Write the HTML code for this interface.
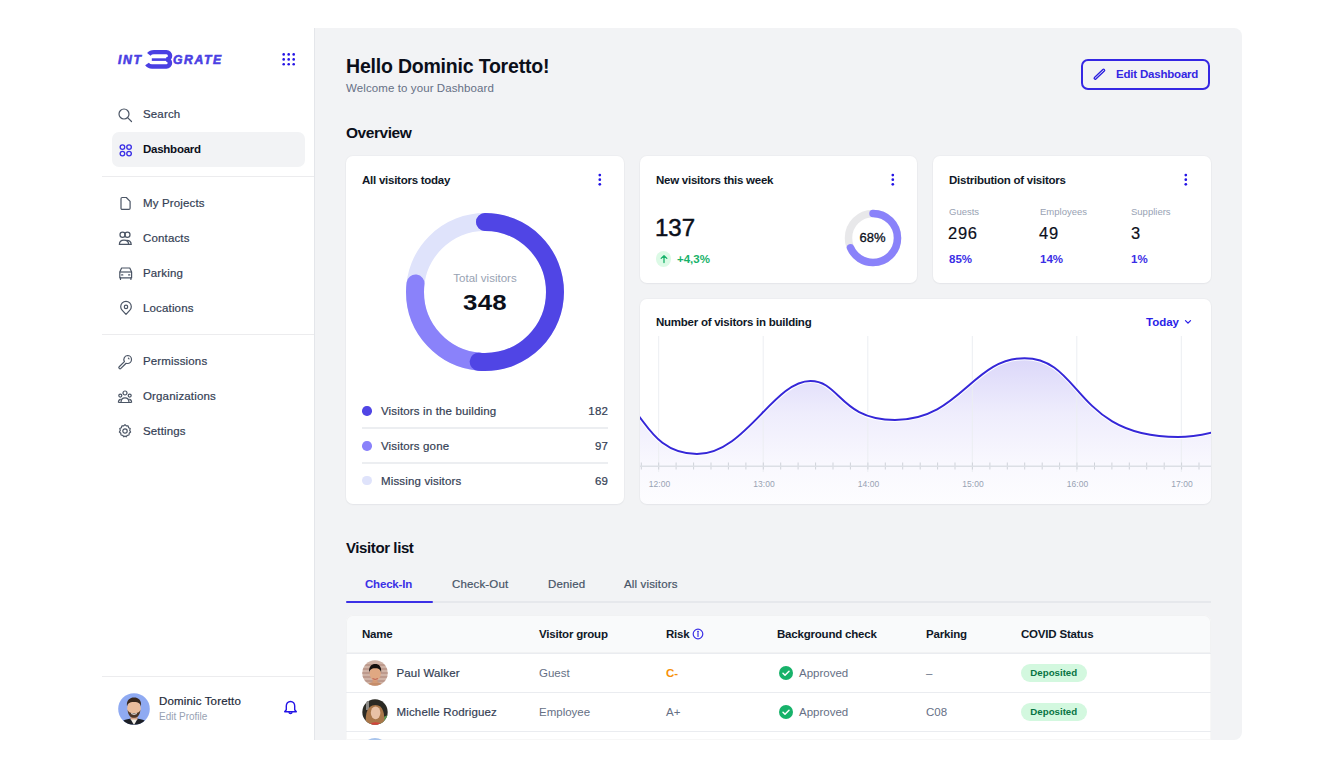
<!DOCTYPE html>
<html><head><meta charset="utf-8">
<style>
*{box-sizing:border-box;margin:0;padding:0}
html,body{width:1344px;height:768px;overflow:hidden;background:#fff;font-family:"Liberation Sans",sans-serif;color:#111827}
.abs{position:absolute;white-space:nowrap}
#main{position:absolute;left:314px;top:28px;width:928px;height:712px;background:#f2f3f5;border-radius:0 8px 8px 0;border-left:1px solid #e4e6ea}
.nav{position:absolute;left:143px;font-size:11.5px;color:#344054;line-height:14px;white-space:nowrap;-webkit-text-stroke:0.2px #344054;letter-spacing:0.15px}
.med{-webkit-text-stroke:0.2px currentColor;letter-spacing:0.15px}
.ico{position:absolute;left:116px}
.sep{position:absolute;left:102px;width:212px;height:1px;background:#ececee}
.card{position:absolute;background:#fff;border-radius:7px;box-shadow:0 0 0 1px rgba(16,24,40,0.02),0 1px 2px rgba(16,24,40,0.04)}
.ctitle{position:absolute;font-size:11.5px;font-weight:bold;color:#101828;line-height:14px;white-space:nowrap;letter-spacing:-0.25px}
.kebab{position:absolute;width:3px}
.kebab i{display:block;width:2.7px;height:2.7px;border-radius:50%;background:#2414e6;margin-bottom:2.1px}
.t{position:absolute;white-space:nowrap;line-height:14px}
</style></head><body>
<!-- ============ SIDEBAR ============ -->
<svg class="abs" style="left:110px;top:44px" width="120" height="30" viewBox="110 44 120 30">
  <g fill="#4a3fe3" stroke="#4a3fe3" stroke-width="0.6" font-family="Liberation Sans" font-weight="bold" font-style="italic" font-size="12.2" letter-spacing="1.6">
    <text x="118" y="63.7">INT</text>
    <text x="173" y="63.7" letter-spacing="1.6">GRATE</text>
  </g>
  <g fill="none" stroke="#4a3fe3" stroke-linejoin="round">
    <path d="M148.8 54.4 Q150.6 52.1 154 52.1 H166.4 A3.7 3.7 0 0 1 166.4 59.5" stroke-width="4.4"/>
    <path d="M151.8 59.6 H167" stroke-width="2.6"/>
    <path d="M166.4 59.5 A3.5 3.5 0 0 1 166.4 66.5 H152 Q148.8 66.5 147 64" stroke-width="4.6"/>
  </g>
</svg>
<svg class="abs" style="left:282px;top:53px" width="14" height="14"><g fill="#2414e6">
  <circle cx="1.7" cy="1.4" r="1.3"/><circle cx="6.7" cy="1.4" r="1.3"/><circle cx="11.7" cy="1.4" r="1.3"/>
  <circle cx="1.7" cy="6.4" r="1.3"/><circle cx="6.7" cy="6.4" r="1.3"/><circle cx="11.7" cy="6.4" r="1.3"/>
  <circle cx="1.7" cy="11.3" r="1.3"/><circle cx="6.7" cy="11.3" r="1.3"/><circle cx="11.7" cy="11.3" r="1.3"/>
</g></svg>

<div class="abs" style="left:112px;top:132px;width:193px;height:35px;background:#f2f3f5;border-radius:7px"></div>
<div class="sep" style="top:176px"></div>
<div class="sep" style="top:334px"></div>
<div class="sep" style="top:676.2px"></div>

<!-- nav icons -->
<svg class="ico" style="top:106px" width="18" height="18" viewBox="0 0 18 18" fill="none" stroke="#4b5565" stroke-width="1.2" stroke-linecap="round">
  <circle cx="8" cy="8" r="5"/><path d="M11.6 11.6 L15.5 15.5"/></svg>
<svg class="ico" style="top:141px" width="18" height="18" viewBox="0 0 18 18" fill="none" stroke="#3b30e6" stroke-width="1.35">
  <circle cx="6.45" cy="6.1" r="2.3"/><circle cx="13.05" cy="6.1" r="2.3"/><circle cx="6.45" cy="12.6" r="2.3"/><circle cx="13.05" cy="12.6" r="2.3"/></svg>
<svg class="ico" style="top:195px" width="18" height="18" viewBox="0 0 18 18" fill="none" stroke="#4b5565" stroke-width="1.2" stroke-linejoin="round">
  <path d="M6.2 2.5 h4.1 l3.8 3.8 v6.9 a1.2 1.2 0 0 1 -1.2 1.2 h-6.7 a1.2 1.2 0 0 1 -1.2 -1.2 v-9.5 a1.2 1.2 0 0 1 1.2 -1.2 z"/></svg>
<svg class="ico" style="top:230px" width="18" height="18" viewBox="0 0 18 18" fill="none" stroke="#4b5565" stroke-width="1.25">
  <circle cx="6.6" cy="4.8" r="2.6"/><circle cx="11.4" cy="4.8" r="2.6"/>
  <path d="M3.4 14.4 c0 -2.8 2 -4.2 4.6 -4.2 c2.6 0 4.6 1.4 4.6 4.2 z"/><path d="M10.6 10.3 c2.4 -0.2 4.6 1.2 4.6 4.1 h-3"/></svg>
<svg class="ico" style="top:265px" width="18" height="18" viewBox="0 0 18 18" fill="none" stroke="#4b5565" stroke-width="1.2" stroke-linejoin="round">
  <path d="M5.6 3 h8.2 l1.8 4 v5.8 h-11.8 v-5.8 z"/><path d="M3.8 7 h11.8"/><path d="M4.5 12.8 v1.6 M14.9 12.8 v1.6" stroke-linecap="round"/>
  <path d="M5.6 9.9 h1.2 M12.6 9.9 h1.2" stroke-linecap="round"/></svg>
<svg class="ico" style="top:299px;left:117px" width="18" height="18" viewBox="0 0 18 18" fill="none" stroke="#4b5565" stroke-width="1.2" stroke-linejoin="round">
  <path d="M9 15.4 l-3.7 -4 a5.3 5.3 0 1 1 7.4 0 z"/><circle cx="9" cy="7.9" r="1.7"/></svg>
<svg class="ico" style="top:353px" width="18" height="18" viewBox="0 0 18 18" fill="none" stroke="#4b5565" stroke-width="1.2" stroke-linejoin="round" stroke-linecap="round">
  <path d="M11.5 2.5 a4 4 0 0 1 0 8 a4 4 0 0 1 -1.4 -0.25 l-5.2 5.2 a1.2 1.2 0 0 1 -1.7 -1.7 l5.2 -5.2 a4 4 0 0 1 3.1 -6.05 z"/><path d="M12.4 5.2 l0.6 0.6"/></svg>
<svg class="ico" style="top:388px" width="18" height="18" viewBox="0 0 18 18" fill="none" stroke="#4b5565" stroke-width="1.2" stroke-linejoin="round">
  <circle cx="9" cy="5" r="2"/><circle cx="4.3" cy="7.6" r="1.5"/><circle cx="13.7" cy="7.6" r="1.5"/>
  <path d="M5 14.5 c0 -3 1.7 -4.6 4 -4.6 c2.3 0 4 1.6 4 4.6 z"/><path d="M2.4 14.5 c0 -2 0.8 -3.2 2.4 -3.2 M15.6 14.5 c0 -2 -0.8 -3.2 -2.4 -3.2 M2.4 14.5 h13.2"/></svg>
<svg class="ico" style="top:422px" width="18" height="18" viewBox="0 0 18 18" fill="none" stroke="#4b5565" stroke-width="1.2" stroke-linejoin="round">
  <path d="M9 2.6 l1.3 1.3 h1.8 l0.5 1.8 l1.6 0.9 l-0.5 1.8 l0.9 1.6 l-1.4 1.2 l-0.2 1.8 l-1.8 0.3 l-1.1 1.5 l-1.1 -0.7 l-1.1 0.7 l-1.1 -1.5 l-1.8 -0.3 l-0.2 -1.8 l-1.4 -1.2 l0.9 -1.6 l-0.5 -1.8 l1.6 -0.9 l0.5 -1.8 h1.8 z"/><circle cx="9" cy="9" r="2.2"/></svg>

<div class="nav" style="top:107px">Search</div>
<div class="nav" style="top:142px;color:#0b0f1a;font-weight:bold;letter-spacing:-0.25px;-webkit-text-stroke:0">Dashboard</div>
<div class="nav" style="top:196px">My Projects</div>
<div class="nav" style="top:231px">Contacts</div>
<div class="nav" style="top:266px">Parking</div>
<div class="nav" style="top:301px">Locations</div>
<div class="nav" style="top:354px">Permissions</div>
<div class="nav" style="top:389px">Organizations</div>
<div class="nav" style="top:424px">Settings</div>

<!-- profile -->
<svg class="abs" style="left:117.5px;top:692.5px" width="32" height="32" viewBox="0 0 32 32">
  <defs><clipPath id="pc"><circle cx="16" cy="16" r="15.8"/></clipPath></defs>
  <g clip-path="url(#pc)">
    <rect width="32" height="32" fill="#8faaf2"/>
    <path d="M2 33 c1 -5 5 -7.5 14 -7.5 c9 0 13 2.5 14 7.5 z" fill="#1c1f26"/>
    <path d="M12.5 26 l3.5 6 l3.5 -6 z" fill="#f2efe9"/>
    <rect x="12.5" y="20" width="7" height="6.5" fill="#d8a486"/>
    <ellipse cx="16" cy="15.2" rx="6.8" ry="8" fill="#ebbd9c"/>
    <path d="M9 13.5 c-0.8 -6.5 3 -9 7 -9 c4.3 0 7.8 2.5 7 9 c-0.8 -3 -2 -4.5 -7 -4.5 c-5 0 -6.2 1.5 -7 4.5 z" fill="#3a281d"/>
    <path d="M9.6 17 c0.6 6 3.4 7.8 6.4 7.8 c3 0 5.8 -1.8 6.4 -7.8 c-1 2.6 -3 3.2 -6.4 3.2 c-3.4 0 -5.4 -0.6 -6.4 -3.2 z" fill="#4d3527"/>
    <path d="M13.2 20.6 q2.8 1.4 5.6 0" stroke="#fff" stroke-width="1" fill="none"/>
  </g></svg>
<div class="t med" style="left:159px;top:694px;font-size:11.5px;color:#1d2939">Dominic Toretto</div>
<div class="t" style="left:159px;top:709.5px;font-size:10px;color:#98a2b3">Edit Profile</div>
<svg class="abs" style="left:282px;top:699px" width="17" height="18" viewBox="0 0 17 18" fill="none" stroke="#2414e6" stroke-width="1.4" stroke-linejoin="round">
  <path d="M8.5 2.5 c-2.6 0 -4.2 2 -4.2 4.6 v3.6 l-1.6 2 h11.6 l-1.6 -2 v-3.6 c0 -2.6 -1.6 -4.6 -4.2 -4.6 z"/><path d="M6.8 13.3 a1.8 1.8 0 0 0 3.4 0"/></svg>

<!-- ============ MAIN ============ -->
<div id="main"></div>

<div class="t" id="hello" style="left:346px;top:54px;font-size:19.5px;font-weight:bold;color:#0b0f1a;line-height:24px;letter-spacing:-0.2px">Hello Dominic Toretto!</div>
<div class="t" id="welcome" style="left:346px;top:81px;font-size:11.5px;color:#667085;letter-spacing:0.1px">Welcome to your Dashboard</div>
<div class="abs" style="left:1080.8px;top:58.8px;width:129.6px;height:31.2px;border:2px solid #3527e3;border-radius:7px"></div>
<svg class="abs" style="left:1090px;top:65px" width="18" height="18" viewBox="1090 65 18 18" fill="none" stroke-linecap="round">
  <path d="M1095.2 78.2 L1103.6 70.3" stroke="#2a1ee0" stroke-width="3.4"/>
  <path d="M1095.2 78.2 L1103.6 70.3" stroke="#f2f3f5" stroke-width="1.0"/></svg>
<div class="t" id="editbtn" style="left:1116px;top:67px;font-size:11.5px;font-weight:bold;color:#3527e3;letter-spacing:-0.2px">Edit Dashboard</div>

<div class="t" id="overview" style="left:346px;top:124px;font-size:15.5px;font-weight:bold;color:#0b0f1a;line-height:18px;letter-spacing:-0.45px">Overview</div>

<div class="card" style="left:346px;top:156px;width:278px;height:348px"></div>
<div class="card" style="left:640px;top:156px;width:277px;height:127px"></div>
<div class="card" style="left:933px;top:156px;width:278px;height:127px"></div>
<div class="card" style="left:640px;top:299px;width:571px;height:205px;overflow:hidden" id="chartcard">
  <svg width="571" height="205" viewBox="640 299 571 205" style="position:absolute;left:0;top:0">
    <defs><linearGradient id="cg" x1="0" y1="355" x2="0" y2="504" gradientUnits="userSpaceOnUse">
      <stop offset="0" stop-color="#6c5ce7" stop-opacity="0.25"/><stop offset="0.4" stop-color="#6c5ce7" stop-opacity="0.11"/><stop offset="0.75" stop-color="#6c5ce7" stop-opacity="0.04"/><stop offset="1" stop-color="#6c5ce7" stop-opacity="0.015"/></linearGradient></defs>
    <path d="M638 415 C648.3 427.4 661.6 454.0 697.0 454.0 C745.2 454.0 773.6 381.0 810.5 381.0 C840.1 381.0 840.1 420.0 895.0 420.0 C959.8 420.0 972.7 358.2 1024.5 358.2 C1082.1 358.2 1074.4 437.0 1178.0 437.0 C1195.1 437.0 1212.2 432.3 1214.0 432.0 V504 H638 Z" fill="url(#cg)"/>
    <g stroke="#eceef2" stroke-width="1">
      <path d="M658.7 336 V472 M763.2 336 V472 M867.8 336 V472 M972.3 336 V472 M1076.8 336 V472 M1181.3 336 V472"/>
    </g>
    <path d="M641.3 462.5 V469.5 M658.7 462.5 V469.5 M676.1 462.5 V469.5 M693.6 462.5 V469.5 M711.0 462.5 V469.5 M728.4 462.5 V469.5 M745.9 462.5 V469.5 M763.3 462.5 V469.5 M780.7 462.5 V469.5 M798.1 462.5 V469.5 M815.6 462.5 V469.5 M833.0 462.5 V469.5 M850.4 462.5 V469.5 M867.9 462.5 V469.5 M885.3 462.5 V469.5 M902.7 462.5 V469.5 M920.2 462.5 V469.5 M937.6 462.5 V469.5 M955.0 462.5 V469.5 M972.4 462.5 V469.5 M989.9 462.5 V469.5 M1007.3 462.5 V469.5 M1024.7 462.5 V469.5 M1042.2 462.5 V469.5 M1059.6 462.5 V469.5 M1077.0 462.5 V469.5 M1094.5 462.5 V469.5 M1111.9 462.5 V469.5 M1129.3 462.5 V469.5 M1146.7 462.5 V469.5 M1164.2 462.5 V469.5 M1181.6 462.5 V469.5 M1199.0 462.5 V469.5" stroke="#cfd3da" stroke-width="1"/>
    <path d="M640 466.3 H1211" stroke="#dcdfe5" stroke-width="1.4"/>
    <path d="M638 415 C648.3 427.4 661.6 454.0 697.0 454.0 C745.2 454.0 773.6 381.0 810.5 381.0 C840.1 381.0 840.1 420.0 895.0 420.0 C959.8 420.0 972.7 358.2 1024.5 358.2 C1082.1 358.2 1074.4 437.0 1178.0 437.0 C1195.1 437.0 1212.2 432.3 1214.0 432.0" fill="none" stroke="#fff" stroke-width="4"/>
    <path d="M638 415 C648.3 427.4 661.6 454.0 697.0 454.0 C745.2 454.0 773.6 381.0 810.5 381.0 C840.1 381.0 840.1 420.0 895.0 420.0 C959.8 420.0 972.7 358.2 1024.5 358.2 C1082.1 358.2 1074.4 437.0 1178.0 437.0 C1195.1 437.0 1212.2 432.3 1214.0 432.0" fill="none" stroke="#3527d8" stroke-width="2"/>
    <g font-family="Liberation Sans" font-size="8.5" fill="#98a2b3" text-anchor="middle">
      <text x="659.5" y="487.3">12:00</text><text x="764" y="487.3">13:00</text><text x="868.5" y="487.3">14:00</text>
      <text x="973" y="487.3">15:00</text><text x="1077.5" y="487.3">16:00</text><text x="1182" y="487.3">17:00</text>
    </g>
  </svg>
</div>

<div class="ctitle" style="left:362px;top:173px">All visitors today</div>
<div class="ctitle" style="left:656px;top:173px">New visitors this week</div>
<div class="ctitle" style="left:949px;top:173px">Distribution of visitors</div>
<div class="ctitle" style="left:656px;top:315px">Number of visitors in building</div>

<svg class="abs" style="left:594px;top:170px" width="10" height="20" viewBox="594 170 10 20"><g fill="#2414e6"><circle cx="599.8" cy="175.1" r="1.35"/><circle cx="599.8" cy="179.7" r="1.35"/><circle cx="599.8" cy="184.3" r="1.35"/></g></svg>
<svg class="abs" style="left:887px;top:170px" width="10" height="20" viewBox="887 170 10 20"><g fill="#2414e6"><circle cx="892.8" cy="175.1" r="1.35"/><circle cx="892.8" cy="179.7" r="1.35"/><circle cx="892.8" cy="184.3" r="1.35"/></g></svg>
<svg class="abs" style="left:1180px;top:170px" width="10" height="20" viewBox="1180 170 10 20"><g fill="#2414e6"><circle cx="1185.8" cy="175.1" r="1.35"/><circle cx="1185.8" cy="179.7" r="1.35"/><circle cx="1185.8" cy="184.3" r="1.35"/></g></svg>

<!-- donut -->
<svg class="abs" style="left:395px;top:202px" width="180" height="180" viewBox="0 0 180 180">
  <g transform="rotate(-90 90 90)" fill="none" stroke-width="18" stroke-linecap="round">
    <circle cx="90" cy="90" r="70" stroke="#dfe3fb"/>
    <circle cx="90" cy="90" r="70" stroke="#8a82fa" stroke-dasharray="0 224.6 113.3 1000"/>
    <circle cx="90" cy="90" r="70" stroke="#5045e5" stroke-dasharray="226 1000"/>
  </g>
</svg>
<div class="t" style="left:395px;top:271px;width:180px;text-align:center;font-size:11.5px;color:#98a2b3">Total visitors</div>
<div class="t" style="left:395px;top:290px;width:180px;text-align:center;font-size:21.5px;font-weight:bold;color:#0b0f1a;line-height:26px;transform:scaleX(1.2);letter-spacing:0.3px">348</div>

<!-- legend -->
<div class="abs" style="left:362px;top:406px;width:9.5px;height:9.5px;border-radius:50%;background:#5045e5"></div>
<div class="abs" style="left:362px;top:441px;width:9.5px;height:9.5px;border-radius:50%;background:#8a82fa"></div>
<div class="abs" style="left:362px;top:475.5px;width:9.5px;height:9.5px;border-radius:50%;background:#dfe3fb"></div>
<div class="t med" style="left:381px;top:404px;font-size:11.5px;color:#344054">Visitors in the building</div>
<div class="t med" style="left:381px;top:439px;font-size:11.5px;color:#344054">Visitors gone</div>
<div class="t med" style="left:381px;top:474px;font-size:11.5px;color:#344054">Missing visitors</div>
<div class="t med" style="left:508px;width:100px;text-align:right;top:404px;font-size:11.5px;color:#344054">182</div>
<div class="t med" style="left:508px;width:100px;text-align:right;top:439px;font-size:11.5px;color:#344054">97</div>
<div class="t med" style="left:508px;width:100px;text-align:right;top:474px;font-size:11.5px;color:#344054">69</div>
<div class="abs" style="left:362px;top:427px;width:246px;height:1.5px;background:#eceef1"></div>
<div class="abs" style="left:362px;top:462px;width:246px;height:1.5px;background:#eceef1"></div>

<!-- card 2 -->
<div class="t" style="left:655px;top:213.5px;font-size:24px;color:#0b0f1a;line-height:28px;letter-spacing:0;-webkit-text-stroke:0.5px #0b0f1a">137</div>
<div class="abs" style="left:655.5px;top:251px;width:15.6px;height:15.6px;border-radius:50%;background:#dcfae6"></div>
<svg class="abs" style="left:655.5px;top:251px" width="16" height="16" viewBox="0 0 16 16" fill="none" stroke="#17b26a" stroke-width="1.3" stroke-linecap="round" stroke-linejoin="round">
  <path d="M8 11.5 V4.8 M5.2 7.4 L8 4.6 L10.8 7.4"/></svg>
<div class="t" style="left:677px;top:252px;font-size:11.5px;font-weight:bold;color:#17b26a">+4,3%</div>
<svg class="abs" style="left:842.5px;top:208px" width="60" height="60" viewBox="0 0 60 60">
  <g transform="rotate(-90 30 30)" fill="none" stroke-width="7.5" stroke-linecap="round">
    <circle cx="30" cy="30" r="24.5" stroke="#e8e8ea" stroke-linecap="butt"/>
    <circle cx="30" cy="30" r="24.5" stroke="#8a82fa" stroke-dasharray="104.7 1000"/>
  </g></svg>
<div class="t" style="left:842.5px;top:231px;width:60px;text-align:center;font-size:13px;color:#0b0f1a;-webkit-text-stroke:0.3px #0b0f1a">68%</div>

<!-- card 3 -->
<div class="t" style="left:949px;top:206px;font-size:9.5px;color:#98a2b3;line-height:12px">Guests</div>
<div class="t" style="left:1040px;top:206px;font-size:9.5px;color:#98a2b3;line-height:12px">Employees</div>
<div class="t" style="left:1131px;top:206px;font-size:9.5px;color:#98a2b3;line-height:12px">Suppliers</div>
<div class="t" style="left:948px;top:223px;font-size:16.5px;color:#0b0f1a;line-height:20px;letter-spacing:0.7px;-webkit-text-stroke:0.2px #0b0f1a">296</div>
<div class="t" style="left:1039px;top:223px;font-size:16.5px;color:#0b0f1a;line-height:20px;letter-spacing:0.7px;-webkit-text-stroke:0.2px #0b0f1a">49</div>
<div class="t" style="left:1131px;top:223px;font-size:16.5px;color:#0b0f1a;line-height:20px;letter-spacing:0.7px;-webkit-text-stroke:0.2px #0b0f1a">3</div>
<div class="t" style="left:949px;top:252px;font-size:11.5px;font-weight:bold;color:#3b2ee6">85%</div>
<div class="t" style="left:1040px;top:252px;font-size:11.5px;font-weight:bold;color:#3b2ee6">14%</div>
<div class="t" style="left:1131px;top:252px;font-size:11.5px;font-weight:bold;color:#3b2ee6">1%</div>

<!-- chart title right -->
<div class="t" style="left:1146px;top:315px;font-size:11.5px;font-weight:bold;color:#2a1ee8">Today</div>
<svg class="abs" style="left:1183px;top:317px" width="10" height="10" viewBox="0 0 10 10" fill="none" stroke="#2a1ee8" stroke-width="1.3" stroke-linecap="round" stroke-linejoin="round"><path d="M2.5 3.6 L5 6.1 L7.5 3.6"/></svg>

<!-- ============ VISITOR LIST ============ -->
<div class="t" id="vlist" style="left:346px;top:539px;font-size:15px;font-weight:bold;color:#0b0f1a;line-height:18px;letter-spacing:-0.4px">Visitor list</div>
<div class="abs" style="left:346px;top:601.3px;width:865px;height:1.7px;background:#e6e8ec"></div>
<div class="abs" style="left:346px;top:600.7px;width:87px;height:2px;border-radius:1px;background:#3b30e6"></div>
<div class="t" style="left:365px;top:577px;font-size:11.5px;font-weight:bold;color:#3b30e6;letter-spacing:-0.2px">Check-In</div>
<div class="t med" style="left:452px;top:577px;font-size:11.5px;color:#475467">Check-Out</div>
<div class="t med" style="left:548px;top:577px;font-size:11.5px;color:#475467">Denied</div>
<div class="t med" style="left:624px;top:577px;font-size:11.5px;color:#475467">All visitors</div>

<div class="abs" style="left:346px;top:615px;width:865px;height:125px;background:#fff;border-radius:7px 7px 0 0;overflow:hidden;box-shadow:inset 0 0 0 1px rgba(16,24,40,0.035)">
  <div class="abs" style="left:0;top:0;width:865px;height:39px;background:#f9fafb;border-bottom:1px solid #eaecf0;border-radius:7px 7px 0 0;box-shadow:inset 0 0 0 1px rgba(16,24,40,0.035)"></div>
  <div class="abs" style="left:0;top:77px;width:865px;height:1px;background:#eaecf0"></div>
  <div class="abs" style="left:0;top:116px;width:865px;height:1px;background:#eaecf0"></div>
</div>
<div class="t" style="left:362px;top:627px;font-size:11.5px;font-weight:bold;color:#101828;letter-spacing:-0.2px">Name</div>
<div class="t" style="left:539px;top:627px;font-size:11.5px;font-weight:bold;color:#101828;letter-spacing:-0.2px">Visitor group</div>
<div class="t" style="left:666px;top:627px;font-size:11.5px;font-weight:bold;color:#101828;letter-spacing:-0.2px">Risk</div>
<svg class="abs" style="left:692px;top:628px" width="12" height="12" viewBox="0 0 12 12" fill="none" stroke="#3b30e6" stroke-width="1.2"><circle cx="6" cy="6" r="4.8"/><path d="M6 5.4 v3" stroke-linecap="round"/><circle cx="6" cy="3.7" r="0.4" fill="#3b30e6"/></svg>
<div class="t" style="left:777px;top:627px;font-size:11.5px;font-weight:bold;color:#101828;letter-spacing:-0.2px">Background check</div>
<div class="t" style="left:926px;top:627px;font-size:11.5px;font-weight:bold;color:#101828;letter-spacing:-0.2px">Parking</div>
<div class="t" style="left:1021px;top:627px;font-size:11.5px;font-weight:bold;color:#101828;letter-spacing:-0.2px">COVID Status</div>

<!-- row 1 -->
<svg class="abs" style="left:361.5px;top:660px" width="26" height="26" viewBox="0 0 26 26">
  <defs><clipPath id="a1"><circle cx="13" cy="13" r="12.7"/></clipPath></defs>
  <g clip-path="url(#a1)"><rect width="26" height="26" fill="#cfb3a6"/>
  <path d="M0 5 H26 M0 9 H26 M0 13 H26 M0 17 H26 M0 21 H26" stroke="#b89385" stroke-width="1.6"/>
  <path d="M5 27 c1 -4 4 -5 8 -5 c4 0 7 1 8 5 z" fill="#c58d6a"/>
  <rect x="10.5" y="17" width="5" height="6" fill="#d39a76"/>
  <ellipse cx="13.2" cy="13.6" rx="5.6" ry="7" fill="#e0a882"/>
  <path d="M7.2 12.5 c-0.8 -6 2.6 -8.5 6 -8.5 c3.6 0 6.6 2.4 5.9 8.5 c-0.6 -2.6 -1.6 -4.2 -5.9 -4.2 c-4.2 0 -5.4 1.6 -6 4.2 z" fill="#15110f"/>
  <path d="M10.5 18.6 q2.7 1.6 5.4 0" stroke="#b5524a" stroke-width="0.9" fill="none"/></g></svg>
<div class="t med" style="left:396.5px;top:666px;font-size:11.5px;color:#344054">Paul Walker</div>
<div class="t" style="left:539px;top:666px;font-size:11.5px;color:#667085">Guest</div>
<div class="t" style="left:666px;top:666px;font-size:11.5px;font-weight:bold;color:#f79009">C-</div>
<svg class="abs" style="left:779px;top:666px" width="14" height="14" viewBox="0 0 14 14"><circle cx="7" cy="7" r="7" fill="#17b26a"/><path d="M4 7.2 l2 2 l4 -4" fill="none" stroke="#fff" stroke-width="1.5" stroke-linecap="round" stroke-linejoin="round"/></svg>
<div class="t" style="left:799px;top:666px;font-size:11.5px;color:#667085">Approved</div>
<div class="t" style="left:926px;top:666px;font-size:11.5px;color:#667085">–</div>
<div class="abs" style="left:1020.5px;top:663.8px;width:66.5px;height:18.4px;border-radius:9.2px;background:#d3f8df"></div>
<div class="t" style="left:1020.5px;width:66.5px;text-align:center;top:667px;font-size:9.7px;font-weight:bold;color:#087443;line-height:12px">Deposited</div>

<!-- row 2 -->
<svg class="abs" style="left:361.5px;top:699px" width="26" height="26" viewBox="0 0 26 26">
  <defs><clipPath id="a2"><circle cx="13" cy="13" r="12.7"/></clipPath></defs>
  <g clip-path="url(#a2)"><rect width="26" height="26" fill="#2b2a24"/>
  <rect x="4" y="2" width="3" height="9" fill="#8c8a86"/>
  <path d="M19 19 l7 -3 v10 h-8 z" fill="#5b9a55"/>
  <path d="M4 26 c-1 -8 0 -20 9.5 -20 c8 0 9.5 9 8.5 20 z" fill="#a9774a"/>
  <ellipse cx="13.6" cy="13.8" rx="4.8" ry="6.4" fill="#e9c2a6"/>
  <path d="M7 27 c1.5 -3 3.5 -3.8 6.5 -3.8 c3 0 5 0.8 6.5 3.8 z" fill="#d2453c"/></g></svg>
<div class="t med" style="left:396.5px;top:705px;font-size:11.5px;color:#344054">Michelle Rodriguez</div>
<div class="t" style="left:539px;top:705px;font-size:11.5px;color:#667085">Employee</div>
<div class="t" style="left:666px;top:705px;font-size:11.5px;color:#667085">A+</div>
<svg class="abs" style="left:779px;top:705px" width="14" height="14" viewBox="0 0 14 14"><circle cx="7" cy="7" r="7" fill="#17b26a"/><path d="M4 7.2 l2 2 l4 -4" fill="none" stroke="#fff" stroke-width="1.5" stroke-linecap="round" stroke-linejoin="round"/></svg>
<div class="t" style="left:799px;top:705px;font-size:11.5px;color:#667085">Approved</div>
<div class="t" style="left:926px;top:705px;font-size:11.5px;color:#667085">C08</div>
<div class="abs" style="left:1020.5px;top:702.6px;width:66.5px;height:18.4px;border-radius:9.2px;background:#d3f8df"></div>
<div class="t" style="left:1020.5px;width:66.5px;text-align:center;top:706px;font-size:9.7px;font-weight:bold;color:#087443;line-height:12px">Deposited</div>

<!-- row 3 avatar peek -->
<div class="abs" style="left:361.5px;top:738px;width:26px;height:2px;overflow:hidden"><div style="width:26px;height:26px;border-radius:50%;background:#a8c4ec"></div></div>

<!-- white cover below main -->
<div class="abs" style="left:314px;top:740px;width:1030px;height:28px;background:#fff"></div>
</body></html>
